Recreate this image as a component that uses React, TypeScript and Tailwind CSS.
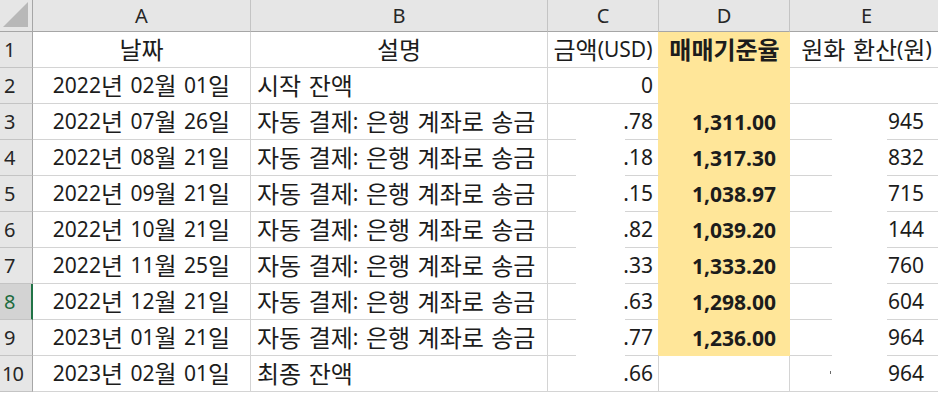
import React from "react";

const FONT = { fontFamily: '"Noto Sans", "Noto Sans CJK KR", sans-serif' };

function T({ text }: { text: string }) {
  const parts = text.split(/([가-힣]+)/).filter((p) => p !== "");
  return (
    <>
      {parts.map((p, i) =>
        /[가-힣]/.test(p) ? (
          <span key={i} className="text-[24px] leading-none">
            {p}
          </span>
        ) : (
          <span key={i} className="text-[21px] leading-none whitespace-pre [word-spacing:2px]">
            {p}
          </span>
        )
      )}
    </>
  );
}

type Row = { n: number; a: string; b: string; c: string; d: string; e: string };

const rows: Row[] = [
  { n: 2, a: "2022년 02월 01일", b: "시작 잔액", c: "0", d: "", e: "" },
  { n: 3, a: "2022년 07월 26일", b: "자동 결제: 은행 계좌로 송금", c: ".78", d: "1,311.00", e: "945" },
  { n: 4, a: "2022년 08월 21일", b: "자동 결제: 은행 계좌로 송금", c: ".18", d: "1,317.30", e: "832" },
  { n: 5, a: "2022년 09월 21일", b: "자동 결제: 은행 계좌로 송금", c: ".15", d: "1,038.97", e: "715" },
  { n: 6, a: "2022년 10월 21일", b: "자동 결제: 은행 계좌로 송금", c: ".82", d: "1,039.20", e: "144" },
  { n: 7, a: "2022년 11월 25일", b: "자동 결제: 은행 계좌로 송금", c: ".33", d: "1,333.20", e: "760" },
  { n: 8, a: "2022년 12월 21일", b: "자동 결제: 은행 계좌로 송금", c: ".63", d: "1,298.00", e: "604" },
  { n: 9, a: "2023년 01월 21일", b: "자동 결제: 은행 계좌로 송금", c: ".77", d: "1,236.00", e: "964" },
  { n: 10, a: "2023년 02월 01일", b: "최종 잔액", c: ".66", d: "", e: "964" },
];

function ColHead({ label, w }: { label: string; w: string }) {
  return (
    <div
      className={`${w} h-[32px] shrink-0 flex items-center justify-center bg-[#e6e6e6] border-r border-r-[#c4c4c4] border-b border-b-[#a6a6a6] text-[20px] text-[#262626] leading-none`}
    >
      {label}
    </div>
  );
}

export default function App() {
  return (
    <div className="w-[938px] h-[395px] overflow-hidden bg-white text-[#1c1c1c]" style={FONT}>
      <div className="w-[960px] flex flex-col">
        {/* column header row */}
        <div className="flex">
          <div className="w-[33px] h-[32px] shrink-0 bg-[#e6e6e6] border-r border-r-[#a6a6a6] border-b border-b-[#a6a6a6] flex items-end justify-end pr-[4px] pb-[4px]">
            <svg width="25" height="25" viewBox="0 0 25 25">
              <polygon points="25,0 25,25 0,25" fill="#b8b8b8" />
            </svg>
          </div>
          <ColHead label="A" w="w-[218px]" />
          <ColHead label="B" w="w-[297px]" />
          <ColHead label="C" w="w-[111px]" />
          <ColHead label="D" w="w-[131px]" />
          <ColHead label="E" w="w-[154px]" />
        </div>

        {/* row 1 */}
        <div className="flex">
          <div className="w-[33px] h-[36px] shrink-0 bg-[#e6e6e6] border-r border-r-[#a6a6a6] border-b border-b-[#c4c4c4] flex items-center pl-[4px] text-[20px] text-[#262626] leading-none">
            1
          </div>
          <div className="w-[218px] h-[36px] shrink-0 border-r border-b border-[#d4d4d4] flex items-center justify-center">
            <T text="날짜" />
          </div>
          <div className="w-[297px] h-[36px] shrink-0 border-r border-b border-[#d4d4d4] flex items-center justify-center">
            <T text="설명" />
          </div>
          <div className="w-[111px] h-[36px] shrink-0 border-r border-r-[#ffe699] border-b border-b-[#d4d4d4] flex items-center justify-center whitespace-nowrap overflow-visible">
            <T text="금액(USD)" />
          </div>
          <div className="w-[131px] h-[36px] shrink-0 bg-[#ffe699] flex items-center justify-center font-bold">
            <T text="매매기준율" />
          </div>
          <div className="w-[154px] h-[36px] shrink-0 border-r border-b border-[#d4d4d4] flex items-center justify-center whitespace-nowrap">
            <T text="원화 환산(원)" />
          </div>
        </div>

        {rows.map((r) => {
          const gap = r.n >= 3 && r.n <= 9;
          const sel = r.n === 8;
          const filled = r.n <= 9;
          return (
            <div className="flex" key={r.n}>
              <div
                className={
                  sel
                    ? "w-[33px] h-[36px] shrink-0 bg-[#d3d3d3] border-r-2 border-r-[#217346] border-b border-b-[#c4c4c4] flex items-center pl-[4px] text-[20px] text-[#1e6b40] leading-none"
                    : "w-[33px] h-[36px] shrink-0 bg-[#e6e6e6] border-r border-r-[#a6a6a6] border-b border-b-[#c4c4c4] flex items-center pl-[2px] text-[20px] text-[#262626] leading-none tracking-[-1px]"
                }
              >
                <span className={r.n < 10 && !sel ? "pl-[2px]" : ""}>{r.n}</span>
              </div>
              <div className="w-[218px] h-[36px] shrink-0 border-r border-b border-[#d4d4d4] flex items-center justify-center whitespace-nowrap">
                <T text={r.a} />
              </div>
              <div className="w-[297px] h-[36px] shrink-0 border-r border-b border-[#d4d4d4] flex items-center pl-[6px] whitespace-nowrap">
                <T text={r.b} />
              </div>
              <div
                className={`relative w-[111px] h-[36px] shrink-0 border-r border-b border-b-[#d4d4d4] flex items-center justify-end pr-[5px] ${
                  filled ? "border-r-[#ffe699]" : "border-r-[#d4d4d4]"
                }`}
              >
                <T text={r.c} />
                {gap && <div className="absolute left-[28px] bottom-[-1px] w-[49px] h-[1px] bg-white" />}
              </div>
              {filled ? (
                <div className="w-[131px] h-[36px] shrink-0 bg-[#ffe699] flex items-center justify-end pr-[14px] font-bold">
                  <T text={r.d} />
                </div>
              ) : (
                <div className="w-[131px] h-[36px] shrink-0 border-r border-b border-[#d4d4d4]" />
              )}
              <div className="relative w-[154px] h-[36px] shrink-0 border-r border-b border-[#d4d4d4] flex items-center justify-end pr-[19px]">
                <T text={r.e} />
                {gap && <div className="absolute left-[42px] bottom-[-1px] w-[55px] h-[1px] bg-white" />}
                {r.n === 10 && <div className="absolute left-[40px] top-[15px] w-[1px] h-[3px] bg-[#6a6a6a]" />}
              </div>
            </div>
          );
        })}
      </div>
    </div>
  );
}
